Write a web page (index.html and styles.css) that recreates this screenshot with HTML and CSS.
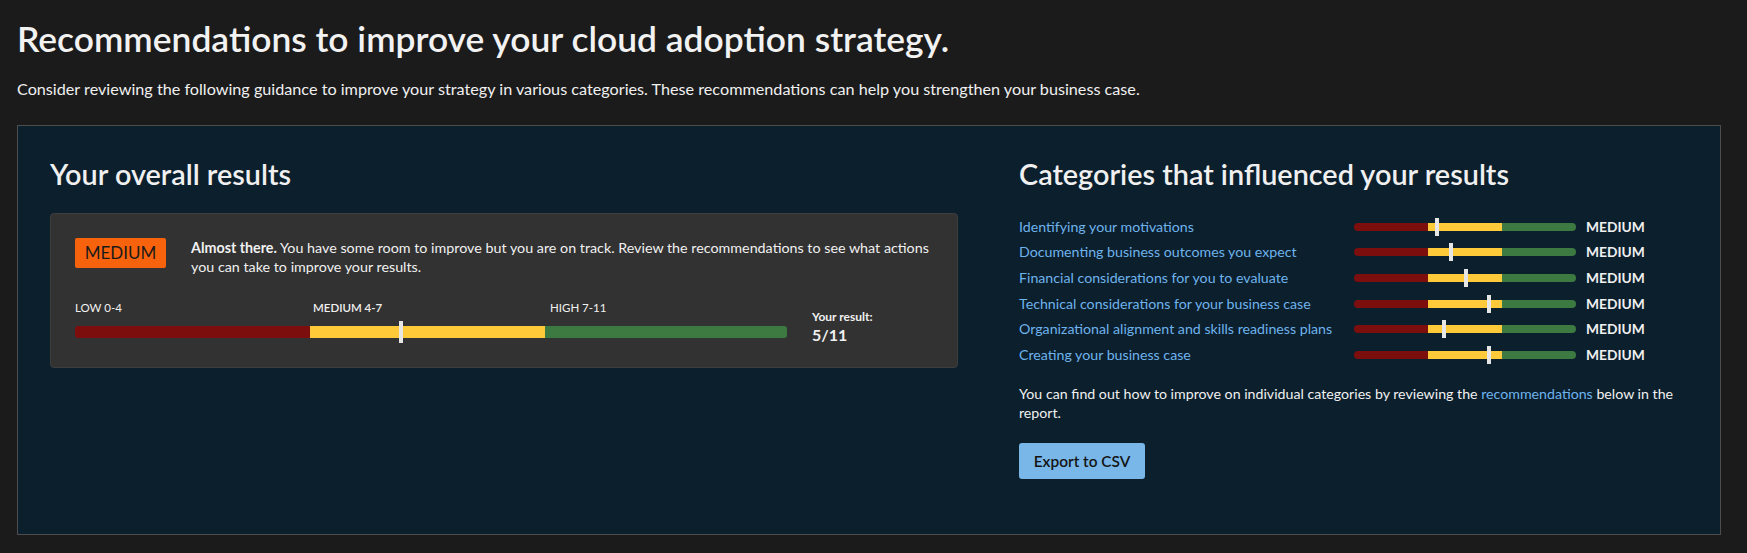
FILE: index.html
```html
<!doctype html>
<html>

<head>
  <title>Cloud adoption strategy - results</title>
  <link rel="stylesheet" href="styles.css">
</head>

<body>
  <h1 class="page-title">Recommendations to improve your cloud adoption strategy.</h1>
  <p class="page-intro">Consider reviewing the following guidance to improve your strategy in various categories. These recommendations can help you strengthen your business case.</p>

  <section class="results-panel">
    <div class="overall">
      <h2 class="panel-title">Your overall results</h2>
      <div class="score-card">
        <div class="score-summary">
          <span class="badge">MEDIUM</span>
          <p><strong>Almost there.</strong> You have some room to improve but you are on track. Review the recommendations to see what actions you can take to improve your results.</p>
        </div>
        <div class="score-scale">
          <div class="scale">
            <div class="scale-labels">
              <span>LOW 0-4</span>
              <span class="current">MEDIUM 4-7</span>
              <span>HIGH 7-11</span>
            </div>
            <div class="bar bar-big">
              <div class="track">
                <span class="seg low"></span><span class="seg mid"></span><span class="seg high"></span>
              </div>
              <span class="marker" style="left: 45.5%"></span>
            </div>
          </div>
          <div class="result">
            <span>Your result:</span>
            <strong>5/11</strong>
          </div>
        </div>
      </div>
    </div>

    <div class="categories">
      <h2 class="panel-title">Categories that influenced your results</h2>
      <ul class="category-list">
        <li>
          <a href="#">Identifying your motivations</a>
          <div class="bar bar-small"><div class="track"><span class="seg low"></span><span class="seg mid"></span><span class="seg high"></span></div><span class="marker" style="left: 36.5%"></span></div>
          <span class="level">MEDIUM</span>
        </li>
        <li>
          <a href="#">Documenting business outcomes you expect</a>
          <div class="bar bar-small"><div class="track"><span class="seg low"></span><span class="seg mid"></span><span class="seg high"></span></div><span class="marker" style="left: 42.8%"></span></div>
          <span class="level">MEDIUM</span>
        </li>
        <li>
          <a href="#">Financial considerations for you to evaluate</a>
          <div class="bar bar-small"><div class="track"><span class="seg low"></span><span class="seg mid"></span><span class="seg high"></span></div><span class="marker" style="left: 49.5%"></span></div>
          <span class="level">MEDIUM</span>
        </li>
        <li>
          <a href="#">Technical considerations for your business case</a>
          <div class="bar bar-small"><div class="track"><span class="seg low"></span><span class="seg mid"></span><span class="seg high"></span></div><span class="marker" style="left: 60%"></span></div>
          <span class="level">MEDIUM</span>
        </li>
        <li>
          <a href="#">Organizational alignment and skills readiness plans</a>
          <div class="bar bar-small"><div class="track"><span class="seg low"></span><span class="seg mid"></span><span class="seg high"></span></div><span class="marker" style="left: 39.6%"></span></div>
          <span class="level">MEDIUM</span>
        </li>
        <li>
          <a href="#">Creating your business case</a>
          <div class="bar bar-small"><div class="track"><span class="seg low"></span><span class="seg mid"></span><span class="seg high"></span></div><span class="marker" style="left: 60%"></span></div>
          <span class="level">MEDIUM</span>
        </li>
      </ul>
      <p class="hint">You can find out how to improve on individual categories by reviewing the <a href="#">recommendations</a> below in the report.</p>
      <button type="button" class="export">Export to CSV</button>
    </div>
  </section>
</body>

</html>
```

FILE: styles.css
```css
html {
  font-family: Lato, "Open Sans", sans-serif;
  color: #f0f0f0;
}

body {
  background: #1b1b1b;
  margin: 0;
  padding: 0 26px 0 17px;
}

.page-title {
  font-size: 35.4px;
  font-weight: 600;
  line-height: 44px;
  margin: 17px 0 0 0;
  color: #f2f2f2;
}

.page-intro {
  font-size: 16.2px;
  line-height: 20px;
  margin: 18px 0 26px 0;
}

.results-panel {
  background: #0b1f2d;
  border: 1px solid #4d4d4d;
  padding: 30px 32px 55px 32px;
  display: flex;
  gap: 61px;
}

.overall {
  flex: 0 0 908px;
}

.categories {
  flex: 1;
}

.panel-title {
  font-size: 28.8px;
  font-weight: 600;
  line-height: 36px;
  margin: 0;
}

.score-card {
  margin-top: 21px;
  background: #323232;
  border: 1px solid #3e3e3e;
  border-radius: 4px;
  padding: 24px;
}

.score-summary {
  display: flex;
  align-items: flex-start;
  gap: 25px;
}

.badge {
  background: #f7630c;
  color: #1a1a1a;
  font-size: 17px;
  line-height: 30px;
  width: 91px;
  text-align: center;
  flex: none;
  border-radius: 2px;
}

.score-summary p {
  margin: 0;
  font-size: 14.3px;
  line-height: 19px;
}

.score-scale {
  display: flex;
  align-items: flex-end;
  gap: 25px;
  margin-top: 25px;
}

.scale {
  flex: 0 0 712px;
}

.scale-labels {
  display: grid;
  grid-template-columns: 238px 237px 1fr;
  font-size: 11.5px;
  line-height: 14px;
  margin-bottom: 6px;
}

.scale-labels .current {
  font-weight: 600;
}

.bar {
  position: relative;
  display: flex;
  align-items: center;
}

.track {
  display: flex;
  width: 100%;
  overflow: hidden;
}

.seg {
  flex: 1;
}

.seg.low {
  background: #7d0e0e;
}

.seg.mid {
  background: #ffca3a;
}

.seg.high {
  background: #3c7a41;
}

.marker {
  position: absolute;
  top: 0;
  width: 4px;
  background: #e6e6e6;
}

.bar-big {
  height: 22px;
}

.bar-big .track {
  height: 12px;
  border-radius: 3px;
}

.bar-big .seg.high {
  flex: 0 0 242px;
}

.bar-big .seg.low,
.bar-big .seg.mid {
  flex: 0 0 235px;
}

.bar-big .marker {
  height: 22px;
}

.result {
  display: flex;
  flex-direction: column;
  margin-bottom: -2px;
}

.result span {
  font-size: 12px;
  font-weight: 700;
  line-height: 16px;
}

.result strong {
  font-size: 16px;
  line-height: 20px;
}

.category-list {
  list-style: none;
  margin: 22px 0 0 0;
  padding: 0;
}

.category-list li {
  display: grid;
  grid-template-columns: 325px 222px auto;
  column-gap: 10px;
  align-items: center;
  height: 25.6px;
  line-height: 18px;
}

.category-list a,
.hint a {
  color: #6fb3ec;
  text-decoration: none;
  font-size: 14.2px;
}

.bar-small {
  height: 18px;
}

.bar-small .track {
  height: 8px;
  border-radius: 4px;
}

.bar-small .marker {
  height: 18px;
}

.level {
  font-size: 13.8px;
  font-weight: 700;
}

.hint {
  font-size: 14.2px;
  line-height: 19.5px;
  margin: 16px 0 0 0;
}

.export {
  margin-top: 20px;
  background: #78b7e7;
  color: #141414;
  border: 0;
  border-radius: 3px;
  font: inherit;
  font-size: 15.4px;
  font-weight: 600;
  height: 36px;
  width: 126px;
}
```
